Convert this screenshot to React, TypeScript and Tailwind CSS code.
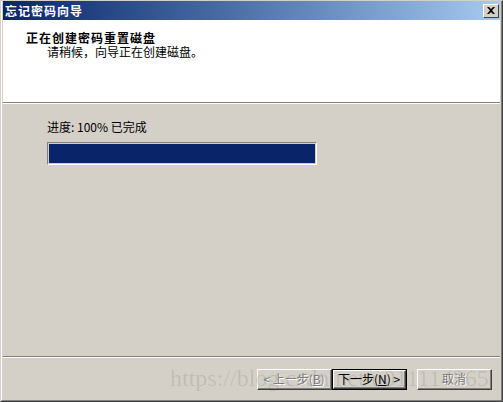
import React from "react";

const cjk = "[font-family:'Noto_Sans_CJK_SC','Liberation_Sans',sans-serif]";

const WinButton = ({
  children,
  disabled,
  isDefault,
}: {
  children: React.ReactNode;
  disabled?: boolean;
  isDefault?: boolean;
}) => (
  <div
    className={
      "w-[75px] h-[21px] " +
      (isDefault ? "border border-black" : "")
    }
  >
    <div className="h-full border-t border-l border-t-white border-l-white border-r border-b border-r-[#404040] border-b-[#404040]">
      <div
        className={
          "h-full flex items-center justify-center border-r border-b border-r-[#808080] border-b-[#808080] text-[12px] leading-[14px] " +
          (disabled
            ? "text-[#808080] [text-shadow:1px_1px_0_#ffffff]"
            : "text-black")
        }
      >
        {children}
      </div>
    </div>
  </div>
);

export default function App() {
  return (
    <div className={"relative w-[503px] h-[402px] bg-[#d4d0c8] " + cjk}>
      <div className="flex flex-col w-full h-full border-t border-l border-t-[#d4d0c8] border-l-[#d4d0c8] border-r border-b border-r-[#404040] border-b-[#404040]">
        <div className="flex-1 flex flex-col border-l border-l-white border-r border-b border-r-[#808080] border-b-[#808080] px-px pb-px">
          {/* title bar */}
          <div className="h-[19px] flex items-center justify-between pl-[2px] pr-[1px] bg-gradient-to-r from-[#0a246a] to-[#a6caf0]">
            <span className="text-white font-bold text-[12px] leading-[14px] tracking-[1px]">
              忘记密码向导
            </span>
            <div className="w-[16px] h-[14px] bg-[#d4d0c8] border-t border-l border-t-white border-l-white border-r border-b border-r-[#404040] border-b-[#404040] flex items-center justify-center">
              <svg width="8" height="7" viewBox="0 0 8 7">
                <path
                  d="M0 0h2l2 2 2-2h2L5 3.5 8 7H6L4 5 2 7H0l3-3.5z"
                  fill="#000"
                />
              </svg>
            </div>
          </div>

          {/* header */}
          <div className="h-[82px] bg-white pt-[11px] pl-[23px]">
            <div className="font-bold text-[12px] leading-[14px] tracking-[1px] text-black">
              正在创建密码重置磁盘
            </div>
            <div className="pl-[21px] text-[12px] leading-[14px] text-black">
              请稍候，向导正在创建磁盘。
            </div>
          </div>
          <div className="border-t border-t-[#808080] border-b border-b-white" />

          {/* content */}
          <div className="flex-1 pl-[44px] pt-[16px]">
            <div className="text-[12px] leading-[14px] text-black">
              进度: 100% 已完成
            </div>
            <div className="mt-[8px] w-[270px] h-[23px] border-t border-l border-t-[#808080] border-l-[#808080] border-r border-b border-r-white border-b-white p-px">
              <div className="w-full h-full bg-[#0a246a]" />
            </div>
          </div>

          {/* footer */}
          <div className="border-t border-t-[#808080] border-b border-b-white" />
          <div className="h-[41px] flex justify-end items-start pt-[11px] pr-[8px]">
            <WinButton disabled>
              &lt; 上一步(<span className="underline">B</span>)
            </WinButton>
            <WinButton isDefault>
              下一步(<span className="underline">N</span>) &gt;
            </WinButton>
            <div className="w-[10px]" />
            <WinButton disabled>取消</WinButton>
          </div>
        </div>
      </div>

      {/* watermark */}
      <div className="absolute left-[170px] top-[364px] pointer-events-none text-[24px] leading-[28px] text-black/10 [font-family:'Liberation_Serif',serif]">
        https://blog.csdn.net/u011114365
      </div>
    </div>
  );
}
